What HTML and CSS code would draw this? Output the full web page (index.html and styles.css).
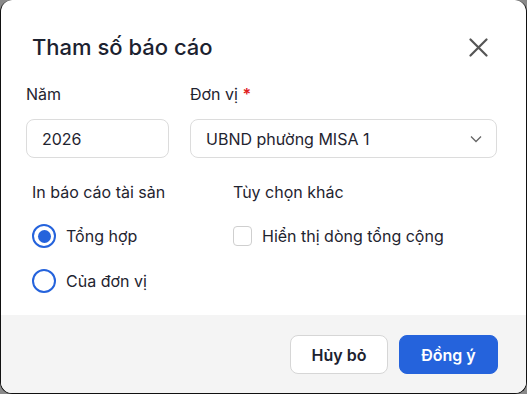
FILE: index.html
```html
<!DOCTYPE html>
<html lang="vi">
<head>
  <meta charset="UTF-8" />
  <title>Tham số báo cáo</title>
  <link rel="stylesheet" href="styles.css">
</head>
<body>

  <div class="dialog">
    <div class="dialog-header">
      <h1 class="dialog-title">Tham số báo cáo</h1>
      <div class="close-btn">
        <svg width="19" height="19" viewBox="0 0 19 19">
          <path d="M1.5 1.5 L17.5 17.5 M17.5 1.5 L1.5 17.5" stroke="#555" stroke-width="2.2" stroke-linecap="round" fill="none" />
        </svg>
      </div>
    </div>

    <div class="dialog-body">
      <div class="field-row">
        <div class="field field-year">
          <label class="field-label">Năm</label>
          <div class="input">2026</div>
        </div>
        <div class="field field-unit">
          <label class="field-label">Đơn vị <span class="required">*</span></label>
          <div class="input select">
            <span>UBND phường MISA 1</span>
            <svg width="12" height="8" viewBox="0 0 12 8">
              <path d="M1 1.5 L6 6.5 L11 1.5" stroke="#666" stroke-width="1.3" fill="none" />
            </svg>
          </div>
        </div>
      </div>

      <div class="option-row">
        <div class="option-group group-print">
          <div class="group-label">In báo cáo tài sản</div>
          <div class="radio-item">
            <span class="radio checked"></span>
            <span>Tổng hợp</span>
          </div>
          <div class="radio-item">
            <span class="radio"></span>
            <span>Của đơn vị</span>
          </div>
        </div>
        <div class="option-group">
          <div class="group-label">Tùy chọn khác</div>
          <div class="check-item">
            <span class="checkbox"></span>
            <span>Hiển thị dòng tổng cộng</span>
          </div>
        </div>
      </div>
    </div>

    <div class="dialog-footer">
      <button class="btn btn-cancel">Hủy bỏ</button>
      <button class="btn btn-ok">Đồng ý</button>
    </div>
  </div>

</body>
</html>
```

FILE: styles.css
```css
* {
  margin: 0;
  padding: 0;
  box-sizing: border-box;
}

html, body {
  width: 527px;
  height: 394px;
  overflow: hidden;
  background: #8a8a8a;
  font-family: 'Inter', 'Noto Sans', sans-serif;
  color: #1f2430;
}

.dialog {
  width: 527px;
  height: 394px;
  background: #fff;
  border: 1px solid #111;
  border-top: none;
  border-radius: 12px;
  overflow: hidden;
  display: flex;
  flex-direction: column;
}

.dialog-header {
  display: flex;
  justify-content: space-between;
  align-items: center;
  padding: 32px 38px 0 31px;
}

.dialog-title {
  font-size: 22px;
  line-height: 30px;
  font-weight: 500;
  color: #1c2230;
}

.close-btn {
  width: 19px;
  height: 19px;
  display: flex;
}

.dialog-body {
  flex: 1;
  padding: 21px 29px 0 25px;
}

.field-row {
  display: flex;
  gap: 21px;
}

.field-year {
  width: 143px;
}

.field-unit {
  flex: 1;
}

.field-label {
  display: block;
  font-size: 16px;
  line-height: 22px;
  margin-bottom: 14px;
}

.required {
  color: #e02020;
  font-weight: 600;
}

.input {
  height: 39px;
  border: 1px solid #dcdcdc;
  border-radius: 8px;
  padding: 0 15px;
  display: flex;
  align-items: center;
  font-size: 16px;
}

.select {
  justify-content: space-between;
  padding-right: 14px;
}

.option-row {
  display: flex;
  margin-top: 23px;
  padding-left: 6px;
}

.group-print {
  width: 201px;
}

.group-label {
  font-size: 16px;
  line-height: 22px;
  margin-bottom: 21px;
}

.radio-item,
.check-item {
  display: flex;
  align-items: center;
  gap: 10px;
  height: 24px;
  font-size: 16px;
  margin-bottom: 21px;
}

.radio {
  width: 24px;
  height: 24px;
  border: 2px solid #2563dc;
  border-radius: 50%;
  display: flex;
  align-items: center;
  justify-content: center;
}

.radio.checked:after {
  content: '';
  width: 13px;
  height: 13px;
  border-radius: 50%;
  background: #2563dc;
}

.checkbox {
  width: 19px;
  height: 20px;
  border: 1px solid #cfcfcf;
  border-radius: 4px;
}

.dialog-footer {
  height: 78px;
  background: #f4f4f4;
  display: flex;
  justify-content: flex-end;
  align-items: center;
  gap: 11px;
  padding: 1px 28px 0 0;
}

.btn {
  height: 39px;
  border-radius: 8px;
  font-family: 'Inter', 'Noto Sans', sans-serif;
  font-size: 16px;
  font-weight: 600;
  cursor: pointer;
}

.btn-cancel {
  width: 98px;
  background: #fff;
  border: 1px solid #d6d6d6;
  color: #1c2230;
}

.btn-ok {
  width: 99px;
  background: #2563dc;
  border: 1px solid #2563dc;
  color: #fff;
}
```
